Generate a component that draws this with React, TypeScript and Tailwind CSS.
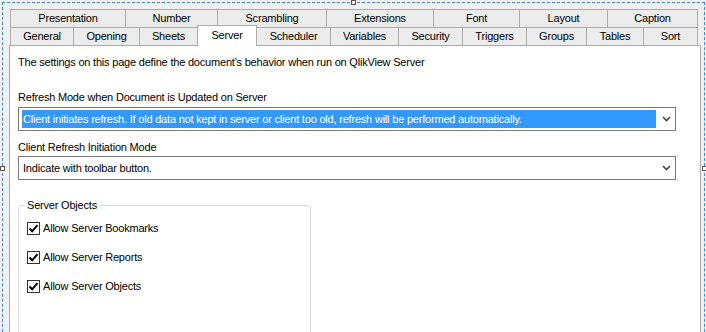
import React from "react";

const topRow: [string, number][] = [
  ["Presentation", 115],
  ["Number", 92],
  ["Scrambling", 109],
  ["Extensions", 107],
  ["Font", 86],
  ["Layout", 88],
  ["Caption", 91],
];

const bottomRow: [string, number][] = [
  ["General", 63],
  ["Opening", 66],
  ["Sheets", 58],
  ["Server", 60],
  ["Scheduler", 73],
  ["Variables", 68],
  ["Security", 64],
  ["Triggers", 64],
  ["Groups", 60],
  ["Tables", 57],
  ["Sort", 55],
];

function Chevron() {
  return (
    <svg width="9" height="6" viewBox="0 0 9 6" className="shrink-0">
      <polyline points="1,1 4.5,4.5 8,1" fill="none" stroke="#444" strokeWidth="1.6" />
    </svg>
  );
}

function Check({ label }: { label: string }) {
  return (
    <div className="flex items-center h-[15px]">
      <div className="w-[13px] h-[13px] border border-[#333] bg-white flex items-center justify-center">
        <svg width="11" height="11" viewBox="0 0 11 11">
          <polyline points="1.5,5.5 4.2,8.3 9.5,2.2" fill="none" stroke="#000" strokeWidth="2" />
        </svg>
      </div>
      <span className="ml-[3px] leading-[15px]">{label}</span>
    </div>
  );
}

export default function App() {
  return (
    <div className="relative w-[706px] h-[332px] overflow-hidden bg-[#f0f0f0] text-[11px] tracking-[-0.2px] text-black font-['Liberation_Sans',Arial,sans-serif]">
      <div className="ml-[2px] mt-[2px] w-[703px] h-[360px] border border-dashed border-[#3d85d8] pl-[6px] pr-[3px] pt-[6px]">
        <div className="flex flex-col">
          {/* top tab row */}
          <div className="flex pl-[1px] h-[18px]">
            {topRow.map(([name, w], i) => (
              <div
                key={name}
                style={{ width: w }}
                className={
                  "h-[18px] bg-[#ececec] border-t border-l border-[#acacac] flex items-center justify-center leading-none" +
                  (i === topRow.length - 1 ? " border-r" : "")
                }
              >
                {name}
              </div>
            ))}
          </div>
          {/* second tab row */}
          <div className="flex pl-[1px] h-[18px]">
            {bottomRow.map(([name, w], i) => {
              if (name === "Server") {
                return (
                  <div
                    key={name}
                    style={{ width: w }}
                    className="relative z-10 -mt-[2px] h-[21px] bg-white border-t border-l border-r border-[#acacac] flex items-start justify-center pt-[4px] leading-none"
                  >
                    {name}
                  </div>
                );
              }
              return (
                <div
                  key={name}
                  style={{ width: w }}
                  className={
                    "h-[18px] bg-[#ececec] border-t border-[#acacac] flex items-center justify-center leading-none" +
                    (name === "Scheduler" ? "" : " border-l") +
                    (i === bottomRow.length - 1 ? " border-r" : "")
                  }
                >
                  {name}
                </div>
              );
            })}
          </div>
          {/* page */}
          <div className="h-[320px] bg-white border border-[#acacac] pl-[8px] pt-[9px]">
            <p className="leading-[15px]">
              The settings on this page define the document's behavior when run on QlikView Server
            </p>
            <p className="mt-[20px] leading-[15px]">Refresh Mode when Document is Updated on Server</p>
            <div className="mt-[2px] w-[658px] h-[24px] border border-[#7a7a7a] flex items-center pl-[3px] pr-[4px]">
              <div className="w-[634px] h-[18px] bg-[#3399ff] text-white flex items-center pl-[1px] leading-none">
                Client initiates refresh. If old data not kept in server or client too old, refresh will be performed automatically.
              </div>
              <div className="ml-auto">
                <Chevron />
              </div>
            </div>
            <p className="mt-[9px] leading-[15px]">Client Refresh Initiation Mode</p>
            <div className="mt-[1px] w-[658px] h-[24px] border border-[#7a7a7a] flex items-center pl-[4px] pr-[4px]">
              <span className="leading-none">Indicate with toolbar button.</span>
              <div className="ml-auto">
                <Chevron />
              </div>
            </div>
            <fieldset className="mt-[18px] w-[293px] h-[160px] border border-[#dcdcdc] rounded-[3px] pl-[8px]">
              <legend className="-ml-[2px] px-[2px] leading-[15px]">Server Objects</legend>
              <div className="mt-[8px] flex flex-col gap-[14px]">
                <Check label="Allow Server Bookmarks" />
                <Check label="Allow Server Reports" />
                <Check label="Allow Server Objects" />
              </div>
            </fieldset>
          </div>
        </div>
      </div>
      {/* selection handles */}
      <div className="absolute left-[351px] top-0 w-[5px] h-[5px] bg-white border border-[#555]" />
      <div className="absolute left-0 top-[166px] w-[5px] h-[5px] bg-white border border-[#555]" />
      <div className="absolute left-[702px] top-[166px] w-[5px] h-[5px] bg-white border border-[#555]" />
    </div>
  );
}
